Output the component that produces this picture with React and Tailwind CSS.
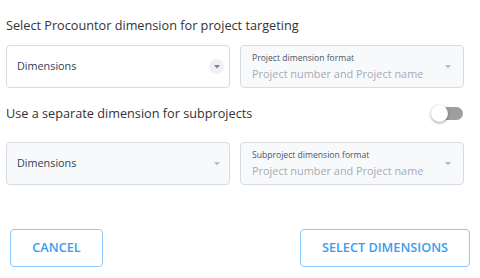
import React from "react";

function Caret({ bubble, light }) {
  return (
    <div className={`flex h-[15px] w-[15px] shrink-0 items-center justify-center rounded-full ${bubble ? "bg-[#eef0f4]" : ""}`}>
      <svg width="6" height="4" viewBox="0 0 6 4">
        <path d="M0 0 L6 0 L3 3.5 Z" fill={light ? "#b8bdc6" : "#7b8290"} />
      </svg>
    </div>
  );
}

function SelectBox({ bubble }) {
  return (
    <div className={`flex h-[43px] min-w-0 items-center justify-between rounded-[4px] border border-[#d7dbe2] pl-[10px] pr-[5px] ${bubble ? "bg-white" : "bg-[#f8f9fb]"}`}>
      <span className="text-[10.8px] text-[#2f3d52]">Dimensions</span>
      <Caret bubble={bubble} light={!bubble} />
    </div>
  );
}

function FormatBox({ label }) {
  return (
    <div className="flex h-[43px] min-w-0 items-center justify-between overflow-hidden rounded-[4px] border border-[#d7dbe2] bg-[#f8f9fb] pl-[11px] pr-[8px]">
      <div className="flex min-w-0 flex-col whitespace-nowrap">
        <span className="text-[8.6px] leading-[10px] text-[#4a5568]">{label}</span>
        <span className="mt-[3px] text-[10.9px] leading-[15px] text-[#a5abb5]">Project number and Project name</span>
      </div>
      <Caret light />
    </div>
  );
}

export default function App() {
  return (
    <div className="h-[278px] w-[480px] bg-white" style={{ fontFamily: "'Open Sans', sans-serif" }}>
      <div className="pl-[6px] pr-[16px] pt-[16px]">
        <div className="text-[12.7px] leading-[18px] text-[#333]">Select Procountor dimension for project targeting</div>
        <div className="mt-[11px] grid grid-cols-[224px_224px] gap-[10px]">
          <SelectBox bubble />
          <FormatBox label="Project dimension format" />
        </div>
        <div className="mt-[16px] flex h-[18px] items-center justify-between">
          <span className="text-[12.7px] leading-[18px] text-[#333]">Use a separate dimension for subprojects</span>
          <div className="relative mr-[1px] h-[13px] w-[32px]">
            <div className="absolute right-0 top-0 h-[13px] w-[27px] rounded-full bg-[#9e9e9e]" />
            <div className="absolute left-0 top-[-2px] h-[17px] w-[17px] rounded-full bg-white shadow-[0_1px_3px_rgba(0,0,0,0.4)]" />
          </div>
        </div>
        <div className="mt-[20px] grid grid-cols-[224px_224px] gap-[10px]">
          <SelectBox />
          <FormatBox label="Subproject dimension format" />
        </div>
      </div>
      <div className="mt-[44px] flex justify-between pl-[10px] pr-[10px]">
        <button className="h-[38px] w-[93px] rounded-[4px] border border-[#8dcaff] text-[12.7px] font-semibold text-[#3a9cf0]">CANCEL</button>
        <button className="h-[38px] w-[170px] rounded-[4px] border border-[#8dcaff] text-[12.7px] font-semibold text-[#3a9cf0]">SELECT DIMENSIONS</button>
      </div>
    </div>
  );
}
